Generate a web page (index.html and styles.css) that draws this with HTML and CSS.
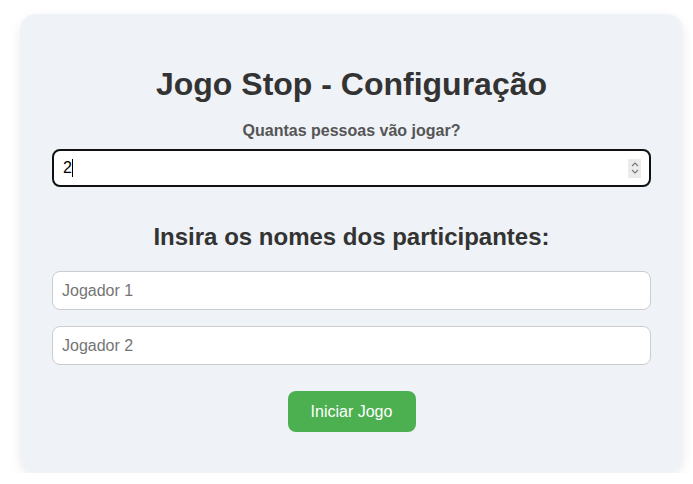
FILE: index.html
```html
<!DOCTYPE html>
<html lang="pt">
<head>
<meta charset="utf-8">
<title>Jogo Stop</title>
<link rel="stylesheet" href="styles.css">
</head>
<body>
<div class="card">
  <h1 class="title">Jogo Stop - Configuração</h1>
  <label class="label" for="qtd">Quantas pessoas vão jogar?</label>
  <div class="num-field">
    <span class="num-value">2</span><span class="caret"></span>
    <span class="spinner">
      <svg width="10" height="16" viewBox="0 0 10 16"><path d="M2 6 L5 3 L8 6" fill="none" stroke="#7a7a7a" stroke-width="1.2"/><path d="M2 10 L5 13 L8 10" fill="none" stroke="#7a7a7a" stroke-width="1.2"/></svg>
    </span>
  </div>
  <h2 class="subtitle">Insira os nomes dos participantes:</h2>
  <div class="names">
    <input class="name-input" type="text" placeholder="Jogador 1">
    <input class="name-input" type="text" placeholder="Jogador 2">
  </div>
  <div class="actions">
    <button class="start-btn">Iniciar Jogo</button>
  </div>
</div>
</body>
</html>
```
FILE: styles.css
```css
html, body {
  margin: 0;
  padding: 0;
  background: #ffffff;
  font-family: "Liberation Sans", Arial, sans-serif;
  color: #333333;
}
body {
  padding: 14px 10px 0 20px;
}
.card {
  width: 663px;
  box-sizing: border-box;
  background: #eff2f7;
  border-radius: 16px;
  box-shadow: 0 4px 12px rgba(0, 0, 0, 0.08);
  padding: 52px 32px 41px;
  display: flex;
  flex-direction: column;
  align-items: stretch;
}
.title {
  margin: 0 0 19px;
  text-align: center;
  font-size: 32px;
  line-height: 37px;
  font-weight: bold;
  color: #333333;
}
.label {
  display: block;
  text-align: center;
  font-size: 16px;
  font-weight: bold;
  color: #555555;
  margin-bottom: 9px;
}
.num-field {
  height: 38px;
  box-sizing: border-box;
  border: 2px solid #111111;
  border-radius: 8px;
  background: #ffffff;
  display: flex;
  align-items: center;
  padding: 0 8px 0 9px;
  font-size: 16px;
  color: #000;
}
.caret {
  width: 1px;
  height: 18px;
  background: #000;
}
.spinner {
  margin-left: auto;
  width: 13px;
  height: 19px;
  background: #ebebeb;
  display: flex;
  align-items: center;
  justify-content: center;
}
.subtitle {
  margin: 36px 0 20px;
  text-align: center;
  font-size: 24px;
  line-height: 28px;
  font-weight: bold;
  color: #333333;
}
.names {
  display: flex;
  flex-direction: column;
  gap: 16px;
}
.name-input {
  height: 39px;
  box-sizing: border-box;
  border: 1px solid #cccccc;
  border-radius: 8px;
  background: #ffffff;
  padding: 0 9px;
  font-family: "Liberation Sans", Arial, sans-serif;
  font-size: 16px;
  color: #333;
  outline: none;
}
.name-input::placeholder {
  color: #757575;
}
.actions {
  display: flex;
  justify-content: center;
  margin-top: 26px;
}
.start-btn {
  width: 128px;
  height: 41px;
  border: none;
  border-radius: 8px;
  background: #4caf50;
  color: #ffffff;
  font-family: "Liberation Sans", Arial, sans-serif;
  font-size: 16px;
  cursor: pointer;
}
```
